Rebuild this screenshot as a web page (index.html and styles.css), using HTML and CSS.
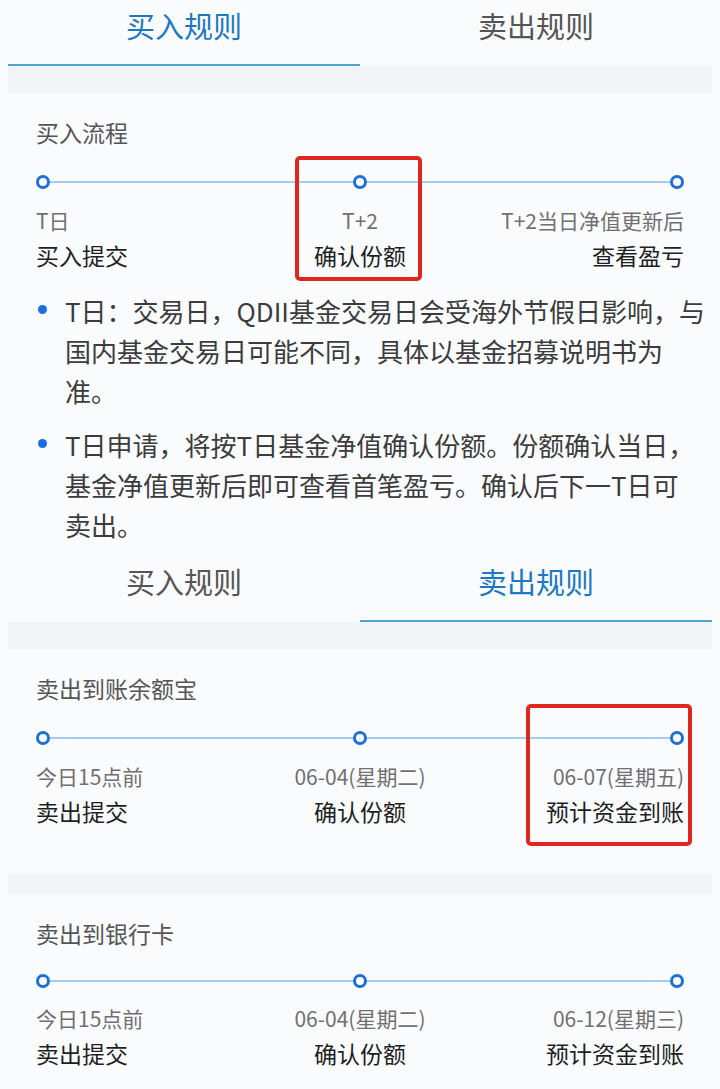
FILE: index.html
```html
<!DOCTYPE html>
<html>
  <head>
    <meta charset="utf-8">
    <link rel="stylesheet" href="styles.css">
  </head>
  <body>
    <div class="page">
      <div class="tabs">
        <div class="tab active">买入规则</div>
        <div class="tab">卖出规则</div>
      </div>
      <div class="band"></div>

      <div class="flow">
        <div class="flow-title">买入流程</div>
        <div class="steps">
          <div class="track">
            <span class="node"></span>
            <span class="node"></span>
            <span class="node"></span>
          </div>
          <div class="labels">
            <div class="step">
              <div class="when">T日</div>
              <div class="what">买入提交</div>
            </div>
            <div class="step">
              <div class="when">T+2</div>
              <div class="what">确认份额</div>
            </div>
            <div class="step">
              <div class="when">T+2当日净值更新后</div>
              <div class="what">查看盈亏</div>
            </div>
          </div>
          <div class="mark mark-buy"></div>
        </div>
      </div>

      <ul class="notes">
        <li>T日：交易日，QDII基金交易日会受海外节假日影响，与国内基金交易日可能不同，具体以基金招募说明书为准。</li>
        <li>T日申请，将按T日基金净值确认份额。份额确认当日，基金净值更新后即可查看首笔盈亏。确认后下一T日可<br>卖出。</li>
      </ul>

      <div class="tabs">
        <div class="tab">买入规则</div>
        <div class="tab active">卖出规则</div>
      </div>
      <div class="band"></div>

      <div class="flow flow-sell">
        <div class="flow-title">卖出到账余额宝</div>
        <div class="steps">
          <div class="track">
            <span class="node"></span>
            <span class="node"></span>
            <span class="node"></span>
          </div>
          <div class="labels">
            <div class="step">
              <div class="when">今日15点前</div>
              <div class="what">卖出提交</div>
            </div>
            <div class="step">
              <div class="when">06-04(星期二)</div>
              <div class="what">确认份额</div>
            </div>
            <div class="step">
              <div class="when">06-07(星期五)</div>
              <div class="what">预计资金到账</div>
            </div>
          </div>
          <div class="mark mark-sell"></div>
        </div>
      </div>
      <div class="band band-thin"></div>

      <div class="flow flow-bank">
        <div class="flow-title">卖出到银行卡</div>
        <div class="steps">
          <div class="track">
            <span class="node"></span>
            <span class="node"></span>
            <span class="node"></span>
          </div>
          <div class="labels">
            <div class="step">
              <div class="when">今日15点前</div>
              <div class="what">卖出提交</div>
            </div>
            <div class="step">
              <div class="when">06-04(星期二)</div>
              <div class="what">确认份额</div>
            </div>
            <div class="step">
              <div class="when">06-12(星期三)</div>
              <div class="what">预计资金到账</div>
            </div>
          </div>
        </div>
      </div>
    </div>
  </body>
</html>
```

FILE: styles.css
```css
body {
  margin: 0;
  background-color: #fafbfd;
  font-family: "Noto Sans CJK SC", "Noto Sans", sans-serif;
  color: #333;
}
.page {
  margin: 0 8px;
}
.tabs {
  display: flex;
}
.tab {
  flex: 1;
  text-align: center;
  font-size: 29px;
  line-height: 50px;
  padding-bottom: 14px;
  border-bottom: 2px solid transparent;
  color: #555;
}
.tab.active {
  color: #1c78c3;
  border-bottom-color: #4ea6d0;
}
.band {
  height: 27px;
  background-color: #f2f3f6;
}
.band-thin {
  height: 20px;
}
.flow {
  padding: 23px 28px 0 28px;
}
.flow-sell {
  padding-bottom: 47px;
}
.flow-title {
  font-size: 23px;
  line-height: 32px;
  color: #555;
}
.steps {
  position: relative;
  margin-top: 27px;
}
.flow-bank .steps {
  margin-top: 25px;
}
.track {
  position: relative;
  display: flex;
  justify-content: space-between;
}
.track::before {
  content: "";
  position: absolute;
  left: 7px;
  right: 7px;
  top: 6px;
  height: 2px;
  background-color: #a6cdee;
}
.node {
  position: relative;
  width: 14px;
  height: 14px;
  box-sizing: border-box;
  border: 3px solid #1d6fd8;
  border-radius: 50%;
  background-color: #fff;
}
.labels {
  display: grid;
  grid-template-columns: 1fr 1fr 1fr;
  margin-top: 17px;
}
.flow-bank .labels {
  margin-top: 16px;
}
.step:nth-child(2) {
  text-align: center;
}
.step:nth-child(3) {
  text-align: right;
}
.when {
  font-size: 21px;
  line-height: 28px;
  color: #707070;
  white-space: nowrap;
}
.what {
  margin-top: 5px;
  font-size: 23px;
  line-height: 32px;
  color: #1f1f1f;
  white-space: nowrap;
}
.mark {
  position: absolute;
  box-sizing: border-box;
  border: 4px solid #e0261e;
  border-radius: 5px;
}
.mark-buy {
  left: 259px;
  top: -19px;
  width: 127px;
  height: 125px;
}
.mark-sell {
  left: 490px;
  top: -27px;
  width: 166px;
  height: 142px;
}
.notes {
  list-style: none;
  margin: 20px 0 11px 0;
  padding: 0 0 0 57px;
  width: 645px;
}
.notes li {
  position: relative;
  font-size: 26px;
  line-height: 40px;
  color: #3c3c3c;
}
.notes li + li {
  margin-top: 14px;
}
.notes li::before {
  content: "";
  position: absolute;
  left: -27px;
  top: 14px;
  width: 9px;
  height: 9px;
  border-radius: 50%;
  background-color: #1a6fe0;
}
```
